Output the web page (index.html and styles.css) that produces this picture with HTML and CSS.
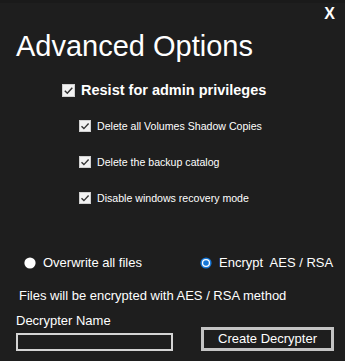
FILE: index.html
```html
<!DOCTYPE html>
<html lang="en">
<head>
  <meta charset="UTF-8" />
  <title>Advanced Options</title>
  <link rel="stylesheet" href="styles.css">
</head>
<body>
  <div class="window">
    <div class="close">X</div>
    <h1 class="title">Advanced Options</h1>

    <div class="check main">
      <svg class="box" viewBox="0 0 13 13"><rect x="0.5" y="0.5" width="12" height="12" fill="#f2f2f2" stroke="#d0d0d0"/><path d="M2.8 6.8 L5.3 9.2 L10.3 3.8" fill="none" stroke="#333" stroke-width="1.5"/></svg>
      <span>Resist for admin privileges</span>
    </div>

    <div class="subs">
      <div class="check sub">
        <svg class="box" viewBox="0 0 12 12"><rect x="0.5" y="0.5" width="11" height="11" fill="#f2f2f2" stroke="#d0d0d0"/><path d="M2.5 6.2 L4.9 8.6 L9.6 3.5" fill="none" stroke="#333" stroke-width="1.4"/></svg>
        <span>Delete all Volumes Shadow Copies</span>
      </div>
      <div class="check sub">
        <svg class="box" viewBox="0 0 12 12"><rect x="0.5" y="0.5" width="11" height="11" fill="#f2f2f2" stroke="#d0d0d0"/><path d="M2.5 6.2 L4.9 8.6 L9.6 3.5" fill="none" stroke="#333" stroke-width="1.4"/></svg>
        <span>Delete the backup catalog</span>
      </div>
      <div class="check sub">
        <svg class="box" viewBox="0 0 12 12"><rect x="0.5" y="0.5" width="11" height="11" fill="#f2f2f2" stroke="#d0d0d0"/><path d="M2.5 6.2 L4.9 8.6 L9.6 3.5" fill="none" stroke="#333" stroke-width="1.4"/></svg>
        <span>Disable windows recovery mode</span>
      </div>
    </div>

    <div class="radios">
      <label class="radio first">
        <svg class="dot" viewBox="0 0 12 12"><circle cx="6" cy="6" r="5.6" fill="#fff"/></svg>
        <span>Overwrite all files</span>
      </label>
      <label class="radio second">
        <svg class="dot" viewBox="0 0 12 12"><circle cx="6" cy="6" r="5.6" fill="#1777d6"/><circle cx="6" cy="6" r="4.1" fill="#fff"/><circle cx="6" cy="6" r="2.8" fill="#1777d6"/></svg>
        <span>Encrypt&nbsp; AES / RSA</span>
      </label>
    </div>

    <p class="info">Files will be encrypted with AES / RSA method</p>

    <div class="bottom">
      <div class="field">
        <div class="field-label">Decrypter Name</div>
        <div class="input"></div>
      </div>
      <div class="button">Create Decrypter</div>
    </div>
  </div>
</body>
</html>
```

FILE: styles.css
```css
body {
  margin: 0;
  background: #1e1e1e;
  font-family: 'Liberation Sans', Arial, sans-serif;
  color: #fff;
}
.window {
  width: 345px;
  height: 361px;
  box-sizing: border-box;
  border-top: 3px solid #1a1a1a;
  overflow: hidden;
}
.close {
  text-align: right;
  padding: 2px 10px 0 0;
  font-size: 16px;
  font-weight: bold;
  line-height: 18px;
}
.title {
  margin: 7px 0 0 16px;
  font-size: 29px;
  font-weight: normal;
  line-height: 33px;
}
.check {
  display: flex;
  align-items: center;
}
.main {
  margin-top: 18px;
  padding-left: 62px;
  gap: 6px;
  font-size: 14.5px;
  font-weight: bold;
  line-height: 18px;
}
.main .box {
  width: 13px;
  height: 13px;
}
.subs {
  margin-top: 20px;
  padding-left: 79px;
  display: flex;
  flex-direction: column;
  gap: 22px;
}
.sub {
  gap: 6px;
  font-size: 10.6px;
  line-height: 14px;
}
.sub .box {
  width: 12px;
  height: 12px;
}
.radios {
  margin-top: 50px;
  display: flex;
  font-size: 13px;
  line-height: 16px;
}
.radio {
  display: flex;
  align-items: center;
  gap: 7px;
}
.radio .dot {
  width: 12px;
  height: 12px;
  flex-shrink: 0;
}
.first {
  padding-left: 24px;
  width: 176px;
}
.info {
  margin: 17px 0 0 19px;
  font-size: 13px;
  line-height: 16px;
}
.bottom {
  margin-top: 9px;
  display: flex;
  align-items: flex-end;
  padding-left: 16px;
}
.field-label {
  font-size: 13px;
  line-height: 16px;
}
.input {
  margin-top: 4px;
  width: 157px;
  height: 18px;
  box-sizing: border-box;
  border: 2px solid #d4d4d4;
}
.button {
  margin-left: 28px;
  width: 133px;
  height: 24px;
  box-sizing: border-box;
  border: 3px solid #c4c4c4;
  font-size: 13px;
  line-height: 18px;
  text-align: center;
}
```
